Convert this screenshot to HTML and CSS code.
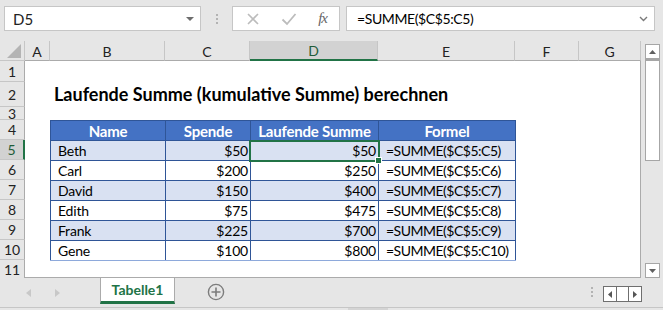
FILE: index.html
```html
<!DOCTYPE html>
<html lang="de">
<head>
  <meta charset="UTF-8">
  <title>Laufende Summe</title>
  <link rel="stylesheet" href="styles.css">
</head>
<body>
  <div class="app">
    <div class="formula-bar">
      <div class="name-box">
        <span>D5</span>
        <svg class="caret" width="8" height="4" viewBox="0 0 8 4"><path d="M0 0h8L4 4z" fill="#6d6d6d"/></svg>
      </div>
      <div class="grip"><i></i><i></i><i></i></div>
      <div class="fx-box">
        <svg width="14" height="14" viewBox="0 0 14 14"><path d="M2 2l10 10M12 2L2 12" stroke="#bcbcbc" stroke-width="1.6"/></svg>
        <svg width="16" height="14" viewBox="0 0 16 14"><path d="M1.5 7.5l4.5 4.5L14.5 2" fill="none" stroke="#bcbcbc" stroke-width="1.8"/></svg>
        <span class="fx">fx</span>
      </div>
      <div class="formula-input">
        <span>=SUMME($C$5:C5)</span>
        <svg width="9" height="6" viewBox="0 0 9 6"><path d="M1 1l3.5 3.5L8 1" fill="none" stroke="#7a7a7a" stroke-width="1.4"/></svg>
      </div>
    </div>

    <div class="workspace">
      <div class="sheet">
        <div class="col-heads">
          <div class="corner"><svg width="16" height="16" viewBox="0 0 16 16"><path d="M16 2V16H2z" fill="#b4b4b4"/></svg></div>
          <div class="col-head w-a">A</div>
          <div class="col-head w-b">B</div>
          <div class="col-head w-c">C</div>
          <div class="col-head w-d active">D</div>
          <div class="col-head w-e">E</div>
          <div class="col-head w-f">F</div>
          <div class="col-head w-g">G</div>
        </div>
        <div class="sheet-body">
          <div class="row-heads">
            <div class="row-head h-1">1</div>
            <div class="row-head h-2">2</div>
            <div class="row-head h-3">3</div>
            <div class="row-head">4</div>
            <div class="row-head active">5</div>
            <div class="row-head">6</div>
            <div class="row-head">7</div>
            <div class="row-head">8</div>
            <div class="row-head">9</div>
            <div class="row-head">10</div>
            <div class="row-head h-11">11</div>
          </div>
          <div class="cells">
            <div class="row h-1"></div>
            <div class="row h-2"><h1 class="title">Laufende Summe (kumulative Summe) berechnen</h1></div>
            <div class="row h-3"></div>
            <table class="data">
              <tr>
                <th class="w-b">Name</th>
                <th class="w-c">Spende</th>
                <th class="w-d">Laufende Summe</th>
                <th class="w-e">Formel</th>
              </tr>
              <tr class="band">
                <td>Beth</td><td class="num">$50</td><td class="num selected">$50<span class="sel"><span class="handle"></span></span></td><td class="formula">=SUMME($C$5:C5)</td>
              </tr>
              <tr>
                <td>Carl</td><td class="num">$200</td><td class="num">$250</td><td class="formula">=SUMME($C$5:C6)</td>
              </tr>
              <tr class="band">
                <td>David</td><td class="num">$150</td><td class="num">$400</td><td class="formula">=SUMME($C$5:C7)</td>
              </tr>
              <tr>
                <td>Edith</td><td class="num">$75</td><td class="num">$475</td><td class="formula">=SUMME($C$5:C8)</td>
              </tr>
              <tr class="band">
                <td>Frank</td><td class="num">$225</td><td class="num">$700</td><td class="formula">=SUMME($C$5:C9)</td>
              </tr>
              <tr class="last">
                <td>Gene</td><td class="num">$100</td><td class="num">$800</td><td class="formula">=SUMME($C$5:C10)</td>
              </tr>
            </table>
          </div>
        </div>
      </div>
      <div class="vscroll">
        <div class="sbtn"><svg width="7" height="4" viewBox="0 0 7 4"><path d="M0 4h7L3.5 0z" fill="#606060"/></svg></div>
        <div class="thumb"></div>
        <div class="track"></div>
        <div class="sbtn"><svg width="7" height="4" viewBox="0 0 7 4"><path d="M0 0h7L3.5 4z" fill="#606060"/></svg></div>
      </div>
    </div>

    <div class="tabs">
      <div class="tab-nav">
        <svg width="5" height="8" viewBox="0 0 5 8"><path d="M5 0v8L0 4z" fill="#c8c8c8"/></svg>
        <svg width="5" height="8" viewBox="0 0 5 8"><path d="M0 0v8l5-4z" fill="#c8c8c8"/></svg>
      </div>
      <div class="tab">Tabelle1</div>
      <div class="add-sheet">
        <svg width="18" height="18" viewBox="0 0 18 18"><circle cx="9" cy="9" r="7.6" fill="none" stroke="#7c7c7c" stroke-width="1.4"/><path d="M9 4.5v9M4.5 9h9" stroke="#7c7c7c" stroke-width="1.6"/></svg>
      </div>
      <div class="spacer"></div>
      <div class="grip"><i></i><i></i><i></i></div>
      <div class="hscroll">
        <div class="hbtn"><svg width="4" height="7" viewBox="0 0 4 7"><path d="M4 0v7L0 3.5z" fill="#555"/></svg></div>
        <div class="hbtn mid"></div>
        <div class="hbtn"><svg width="4" height="7" viewBox="0 0 4 7"><path d="M0 0v7l4-3.5z" fill="#555"/></svg></div>
      </div>
    </div>
    <div class="status"><span class="status-thumb"></span></div>
  </div>
</body>
</html>
```

FILE: styles.css
```css
body {
  margin: 0;
  font-family: Lato, "Liberation Sans", sans-serif;
  background-color: #e6e6e6;
  color: #000;
}
.app {
  width: 663px;
  height: 310px;
  overflow: hidden;
}

/* formula bar */
.formula-bar {
  height: 41px;
  box-sizing: border-box;
  padding-top: 6px;
  display: flex;
  align-items: flex-start;
}
.name-box,
.fx-box,
.formula-input {
  height: 25px;
  box-sizing: border-box;
  background-color: #fff;
  border: 1px solid #c6c6c6;
  display: flex;
  align-items: center;
}
.name-box {
  margin-left: 4px;
  width: 197px;
  padding: 0 6px 0 8px;
  justify-content: space-between;
  font-size: 15px;
  color: #222;
}
.formula-bar .grip {
  width: 31px;
  height: 25px;
}
.grip {
  display: flex;
  flex-direction: column;
  align-items: center;
  justify-content: center;
  gap: 2px;
}
.grip i {
  display: block;
  width: 2px;
  height: 2px;
  background-color: #b3b3b3;
}
.fx-box {
  width: 108px;
  padding: 0 12px 0 13px;
  justify-content: space-between;
}
.fx {
  font-family: "Liberation Serif", serif;
  font-style: italic;
  font-size: 15px;
  color: #666;
  letter-spacing: -1px;
}
.formula-input {
  margin-left: 6px;
  width: 309px;
  padding: 0 6px 0 10px;
  justify-content: space-between;
  font-size: 14px;
  letter-spacing: -0.4px;
}

/* sheet */
.workspace {
  height: 237px;
  display: flex;
}
.sheet {
  width: 641px;
}
.col-heads {
  height: 20px;
  display: flex;
}
.corner {
  width: 25px;
  height: 20px;
  box-sizing: border-box;
  border-right: 1px solid #c6c6c6;
  border-bottom: 1px solid #c6c6c6;
  display: flex;
  align-items: flex-end;
  justify-content: flex-end;
  padding: 0 3px 2px 0;
}
.col-head {
  height: 20px;
  box-sizing: border-box;
  border-right: 1px solid #c6c6c6;
  border-bottom: 1px solid #ababab;
  font-size: 14px;
  color: #222;
  display: flex;
  align-items: center;
  justify-content: center;
  padding-top: 1px;
}
.col-head.active {
  background-color: #d2d2d2;
  border-bottom: 2px solid #217346;
  color: #1f5c39;
}
.w-a { width: 25px; }
.w-b { width: 115px; }
.w-c { width: 85px; }
.w-d { width: 128px; }
.w-e { width: 137px; }
.w-f { width: 64px; }
.w-g { width: 62px; }

.sheet-body {
  display: flex;
  height: 217px;
}
.row-heads {
  width: 25px;
}
.row-head {
  height: 20px;
  box-sizing: border-box;
  border-bottom: 1px solid #c6c6c6;
  border-right: 1px solid #ababab;
  font-size: 14px;
  color: #222;
  display: flex;
  align-items: center;
  justify-content: center;
}
.row-head.active {
  background-color: #d2d2d2;
  border-right: 2px solid #217346;
  color: #1f5c39;
}
.h-1 { height: 21px; }
.h-2 { height: 25px; }
.h-3 { height: 13px; }
.h-11 { height: 18px; border-bottom: none; }

.cells {
  width: 616px;
  box-sizing: border-box;
  background-color: #fff;
  border-right: 1px solid #ababab;
  border-bottom: 1px solid #ababab;
}
.row.h-2 {
  display: flex;
  align-items: flex-end;
}
.title {
  margin: 0 0 2px 29px;
  font-size: 18px;
  font-weight: bold;
  line-height: 22px;
}

.data {
  margin-left: 25px;
  width: 465px;
  border-collapse: collapse;
  table-layout: fixed;
  font-size: 14px;
  letter-spacing: -0.2px;
}
.data th,
.data td {
  height: 20px;
  box-sizing: border-box;
  padding: 0 6px;
  border: 1px solid #2f5597;
  white-space: nowrap;
  line-height: 18px;
}
.data th {
  background-color: #4472c4;
  color: #fff;
  font-weight: bold;
  font-size: 15px;
  letter-spacing: -0.2px;
  text-align: center;
}
.data td {
  text-align: left;
  padding-left: 7px;
}
.data td.formula {
  letter-spacing: -0.5px;
}
.data td.num {
  text-align: right;
  padding-right: 2px;
}
.data tr.band td {
  background-color: #d9e1f2;
}
.data tr.last td {
  border-bottom-color: #8ea9db;
}
.selected {
  position: relative;
}
.sel {
  position: absolute;
  left: -2px;
  top: -1px;
  right: -2px;
  bottom: -2px;
  border: 2px solid #217346;
}
.handle {
  position: absolute;
  right: -4px;
  bottom: -4px;
  width: 5px;
  height: 5px;
  background-color: #217346;
  border: 1px solid #fff;
}

/* vertical scrollbar */
.vscroll {
  margin-left: 4px;
  width: 15px;
  padding-top: 3px;
  display: flex;
  flex-direction: column;
}
.sbtn {
  height: 15px;
  box-sizing: border-box;
  border: 1px solid #a6a6a6;
  background-color: #fff;
  display: flex;
  align-items: center;
  justify-content: center;
}
.thumb {
  height: 102px;
  box-sizing: border-box;
  background-color: #fff;
  border: 1px solid #a6a6a6;
  border-top: 2px solid #a6a6a6;
}
.track {
  flex: 1;
}

/* sheet tabs */
.tabs {
  height: 29px;
  display: flex;
  align-items: stretch;
}
.tab-nav {
  width: 100px;
  box-sizing: border-box;
  display: flex;
  align-items: center;
  gap: 24px;
  padding-left: 26px;
}
.tab {
  width: 75px;
  box-sizing: border-box;
  margin-bottom: 3px;
  background-color: #fff;
  border-left: 1px solid #ababab;
  border-right: 1px solid #ababab;
  border-bottom: 3px solid #217346;
  color: #217346;
  font-weight: bold;
  font-size: 14px;
  display: flex;
  align-items: center;
  justify-content: center;
}
.add-sheet {
  width: 82px;
  display: flex;
  align-items: center;
  justify-content: center;
  padding-bottom: 1px;
}
.spacer {
  flex: 1;
}
.tabs .grip {
  width: 22px;
  padding-bottom: 2px;
}
.hscroll {
  margin: 8px 21px 0 0;
  height: 14px;
  display: flex;
  border: 1px solid #6f6f6f;
}
.hbtn {
  width: 12px;
  background-color: #fff;
  display: flex;
  align-items: center;
  justify-content: center;
}
.hbtn.mid {
  width: 11px;
  border-left: 1px solid #6f6f6f;
  border-right: 1px solid #6f6f6f;
}
.status {
  height: 3px;
  border-top: 1px solid #c6c6c6;
  position: relative;
}
.status-thumb {
  position: absolute;
  left: 348px;
  width: 40px;
  top: 0;
  height: 3px;
  background-color: #d4d4d4;
}
```
